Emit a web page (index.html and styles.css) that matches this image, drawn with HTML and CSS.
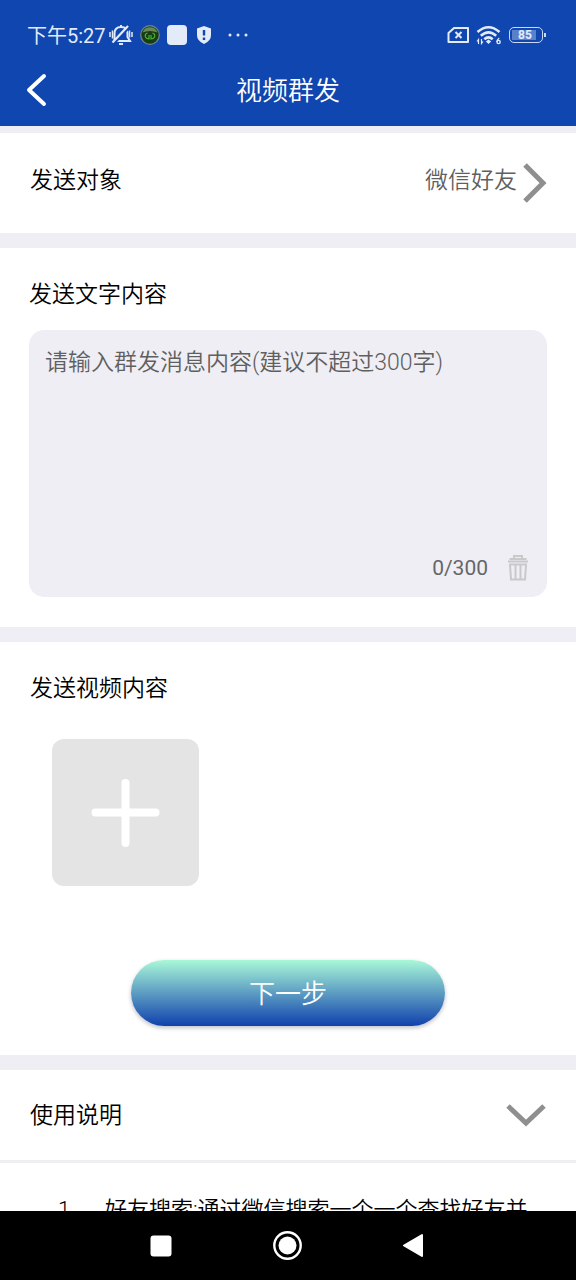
FILE: index.html
```html
<!DOCTYPE html>
<html lang="zh-CN">
<head>
<meta charset="utf-8">
<meta name="viewport" content="width=device-width, initial-scale=1">
<title>视频群发</title>
<link rel="stylesheet" href="styles.css">
</head>
<body>
<header class="header">
  <div class="status">
    <span class="clock">下午5:27</span>
    <svg class="status-mute" width="24" height="22" viewBox="0 0 24 22" fill="none" stroke="#e4ebf8" stroke-width="2">
      <path d="M5.500 16V9.500Q5.500 3 12 3Q18.500 3 18.500 9.500V13L21 17H8M10 20h4M12 1v2"/>
      <path d="M5 19.500L20.500 3" stroke="#1046b0" stroke-width="2.500"/>
      <path d="M3.500 18.500L19 2" stroke-width="2.200"/>
      <path d="M1 8v5M3.500 6.500v8M20.500 6.500v7M23 8v5" stroke-width="1.500"/>
    </svg>
    <svg class="status-app" width="20" height="20" viewBox="0 0 20 20">
      <circle cx="10" cy="10" r="9.300" fill="#183c16" stroke="#71868c" stroke-width="1.200"/>
      <path d="M2.500 7.500A8 8 0 0 1 17.500 7.500Q10 4.500 2.500 7.500" fill="#668a55"/>
      <path d="M7.500 8Q4.500 9 5.500 12Q6.500 14 9 14V10M12.500 8Q15.500 9 14.500 12Q13.500 14 11 14V10" fill="none" stroke="#47b62f" stroke-width="1.200"/>
    </svg>
    <span class="status-tile"></span>
    <svg class="status-shield" width="16" height="20" viewBox="0 0 16 20">
      <path d="M8 1L15 3.500V10Q15 16 8 19Q1 16 1 10V3.500Z" fill="#e4ebf8"/>
      <path d="M8 5v5.500M8 12.500v2.500" stroke="#1046b0" stroke-width="2.400"/>
    </svg>
    <svg class="status-more" width="20" height="4" viewBox="0 0 20 4" fill="#e4ebf8"><circle cx="2" cy="2" r="1.500"/><circle cx="10" cy="2" r="1.500"/><circle cx="18" cy="2" r="1.500"/></svg>
    <span class="status-right">
      <svg width="22" height="18" viewBox="0 0 22 18" fill="none" stroke="#e4ebf8" stroke-width="2"><path d="M7 2H21V16H1.500V7Z" stroke-linejoin="round"/><path d="M8.500 6L14.500 12M14.500 6L8.500 12"/></svg>
      <svg width="26" height="20" viewBox="0 0 26 20" fill="none" stroke="#e4ebf8" stroke-width="2.600"><path d="M1.500 7Q12.500-2.500 23.500 7M4.800 10.800Q12.500 4 20.200 10.800M8.300 14.300Q12.500 10.500 16.700 14.300"/><path d="M12.500 14.500L15.200 16.500L12.500 19L9.800 16.500Z" fill="#e4ebf8" stroke="none"/><path d="M2.500 19V14.500L1 16.500M5.500 14V18.500L7 16.500M23.200 13Q20.900 15 20.900 17" stroke-width="1.200"/><circle cx="22.600" cy="17" r="1.600" stroke-width="1.400"/></svg>
      <span class="battery"><span class="battery-level">85</span></span>
    </span>
  </div>
  <div class="titlebar">
    <button class="back" type="button" aria-label="返回">
      <svg width="22" height="34" viewBox="0 0 22 34" fill="none" stroke="#fff" stroke-width="4" stroke-linecap="round" stroke-linejoin="round"><path d="M18 3L3 17L18 31"/></svg>
    </button>
    <h1 class="title">视频群发</h1>
  </div>
</header>

<main class="content">
  <button class="panel target" type="button">
    <span>发送对象</span>
    <span class="target-value">微信好友
      <svg width="24" height="40" viewBox="0 0 24 40" fill="none" stroke="#8f8f8f" stroke-width="5"><path d="M2 2L20 20L2 38"/></svg>
    </span>
  </button>

  <section class="panel message">
    <label class="label" for="message">发送文字内容</label>
    <div class="editor">
      <textarea class="editor-input" id="message" maxlength="300" placeholder="请输入群发消息内容(建议不超过300字)"></textarea>
      <div class="editor-foot">
        <span>0/300</span>
        <button class="clear" type="button" aria-label="清空">
          <svg width="20" height="26" viewBox="0 0 20 26" fill="none" stroke="#c9c9cb" stroke-width="2"><path d="M6 4V1H14V4"/><path d="M1.500 4H18.500M0 6.500H20" stroke-width="1.800"/><path d="M2 9.500H18L17 24.500H3ZM7.500 10V24M12.500 10V24"/></svg>
        </button>
      </div>
    </div>
  </section>

  <section class="panel video">
    <h2 class="label">发送视频内容</h2>
    <button class="add" type="button" aria-label="添加视频">
      <svg width="69" height="69" viewBox="0 0 69 69" stroke="#fff" stroke-width="8" stroke-linecap="round"><path d="M34.500 5V65M4.500 34.500H64.500"/></svg>
    </button>
    <button class="next" type="button">下一步</button>
  </section>

  <section class="panel help">
    <button class="help-head" type="button" aria-expanded="true">
      <span>使用说明</span>
      <svg width="40" height="24" viewBox="0 0 40 24" fill="none" stroke="#8f8f8f" stroke-width="5"><path d="M2 2L20 19L38 2"/></svg>
    </button>
    <div class="help-item"><span class="help-num">1.</span><span>好友搜索:通过微信搜索一个一个查找好友并</span></div>
  </section>
</main>

<nav class="navbar">
  <button class="nav-button" type="button" aria-label="最近任务"><svg width="22" height="22" viewBox="0 0 22 22"><rect width="21" height="21" x="0.500" y="0.500" rx="3" fill="#fff"/></svg></button>
  <button class="nav-button" type="button" aria-label="主屏幕"><svg width="30" height="30" viewBox="0 0 30 30"><circle cx="14.500" cy="14.500" r="13.200" fill="none" stroke="#fff" stroke-width="2.400"/><circle cx="14.500" cy="14.500" r="9" fill="#fff"/></svg></button>
  <button class="nav-button" type="button" aria-label="后退"><svg width="26" height="26" viewBox="0 0 26 26"><path d="M20 2V23L2 12.500Z" fill="#fff" stroke="#fff" stroke-width="2" stroke-linejoin="round"/></svg></button>
</nav>
</body>
</html>
```
FILE: styles.css
```css
* {
  box-sizing: border-box;
}

body {
  margin: 0;
  height: 100vh;
  display: flex;
  flex-direction: column;
  overflow: hidden;
  background: #efeef4;
  color: #000;
  font-family: Roboto, "Noto Sans CJK SC", sans-serif;
  font-size: 23px;
  font-weight: 350;
  line-height: 34px;
}

button {
  margin: 0;
  padding: 0;
  border: 0;
  background: none;
  color: inherit;
  font: inherit;
}

svg {
  display: block;
  flex: none;
}

.header {
  flex: none;
  background: #1046b0;
  color: #fff;
}

.status {
  display: flex;
  align-items: center;
  height: 54px;
  padding: 16px 33px 0 27px;
  color: #e4ebf8;
  font-size: 20px;
  line-height: 30px;
}

.clock {
  padding-top: 2px;
  font-weight: 400;
}

.status-mute {
  margin-left: 3px;
}

.status-app {
  margin-left: 7px;
}

.status-tile {
  width: 20px;
  height: 20px;
  margin-left: 7px;
  border-radius: 4px;
  background: #e4ebf8;
}

.status-shield {
  margin-left: 9px;
}

.status-more {
  margin-left: 16px;
}

.status-right {
  display: flex;
  align-items: center;
  gap: 7px;
  margin-left: auto;
}

.battery {
  position: relative;
  width: 34px;
  height: 16px;
  padding: 2px;
  border: 1px solid #cbd9f5;
  border-radius: 5px;
}

.battery::after {
  content: "";
  position: absolute;
  top: 5px;
  right: -4px;
  width: 2px;
  height: 4px;
  background: #cbd9f5;
}

.battery-level {
  display: block;
  width: 85%;
  height: 10px;
  background: #5b80cb;
  font-size: 12px;
  font-weight: 700;
  line-height: 11px;
  text-indent: 6px;
}

.titlebar {
  display: grid;
  grid-template-columns: 60px 1fr 60px;
  align-items: center;
  height: 72px;
}

.back {
  padding-left: 26px;
}

.title {
  margin: 0;
  padding-top: 2px;
  font-size: 26px;
  font-weight: inherit;
  text-align: center;
}

.content {
  flex: 1;
  min-height: 0;
  display: flex;
  flex-direction: column;
  gap: 15px;
  padding-top: 7px;
  overflow: hidden;
}

.panel {
  flex: none;
  background: #fff;
}

.target {
  display: flex;
  justify-content: space-between;
  align-items: center;
  width: 100%;
  padding: 26px 29px 30px 30px;
}

.target-value {
  display: flex;
  gap: 6px;
  align-items: center;
  height: 44px;
  color: #5f5f5f;
}

.target-value svg {
  align-self: flex-end;
}

.message {
  padding: 30px 29px 30px;
}

.label {
  display: block;
  margin: 0;
  font-size: inherit;
  font-weight: inherit;
}

.editor {
  margin-top: 18px;
  padding: 16px 16px 7px;
  border-radius: 15px;
  background: #efeef4;
}

.editor-input {
  display: block;
  width: 100%;
  height: 200px;
  padding: 0;
  border: 0;
  outline: 0;
  resize: none;
  background: none;
  color: #000;
  font: inherit;
}

.editor-input::placeholder {
  color: #5f5f5f;
}

.editor-foot {
  display: flex;
  justify-content: flex-end;
  align-items: center;
  gap: 20px;
  height: 44px;
  padding-right: 3px;
  color: #666;
  font-size: 21px;
  font-weight: 400;
}

.video {
  padding: 30px 30px 29px;
}

.add {
  display: grid;
  place-items: center;
  width: 147px;
  height: 147px;
  margin: 33px 0 0 22px;
  border-radius: 12px;
  background: #e4e4e4;
}

.next {
  display: block;
  width: 61%;
  height: 66px;
  margin: 74px auto 0;
  padding-top: 2px;
  border-radius: 33px;
  background: linear-gradient(#a9f8d8, #1041ad);
  box-shadow: 0 2px 4px rgba(0, 0, 40, 0.25);
  color: #fff;
  font-size: 26px;
}

.help-head {
  display: flex;
  justify-content: space-between;
  align-items: center;
  width: 100%;
  height: 93px;
  padding: 2px 30px 0;
  border-bottom: 3px solid #efeff1;
}

.help-item {
  display: flex;
  padding: 30px 30px 30px 58px;
  font-size: 22px;
  white-space: nowrap;
}

.help-num {
  width: 47px;
}

.navbar {
  flex: none;
  display: flex;
  justify-content: center;
  height: 69px;
  background: #000;
}

.nav-button {
  display: grid;
  place-items: center;
  width: 22%;
}
```
